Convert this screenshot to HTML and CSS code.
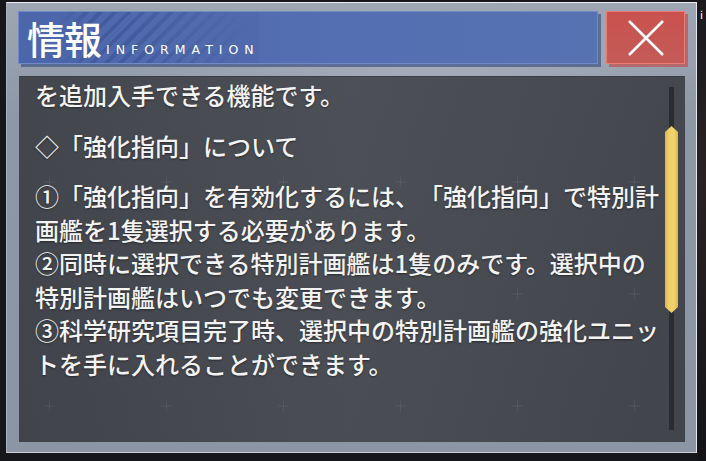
FILE: index.html
```html
<!DOCTYPE html>
<html lang="ja">
<head>
    <meta charset="UTF-8">
    <meta name="viewport" content="width=device-width,initial-scale=1">
    <title>情報</title>
    <link rel="stylesheet" href="styles.css">
</head>
<body>
    <section class="panel">
        <header class="head">
            <div class="title">
                <h1>情報</h1>
                <span class="sub">INFORMATION</span>
            </div>
            <a class="close" href="javascript:;">
                <svg width="36" height="36" viewBox="0 0 36 36">
                    <path d="M1 1L35 35M35 1L1 35" stroke="#fff" stroke-width="2.6" fill="none"/>
                </svg>
            </a>
        </header>
        <div class="body">
            <div class="text">
                <p>を追加入手できる機能です。</p>
                <p>◇「強化指向」について</p>
                <p>①「強化指向」を有効化するには、「強化指向」で特別計<br>画艦を1隻選択する必要があります。<br>②同時に選択できる特別計画艦は1隻のみです。選択中の<br>特別計画艦はいつでも変更できます。<br>③科学研究項目完了時、選択中の特別計画艦の強化ユニッ<br>トを手に入れることができます。</p>
            </div>
            <div class="scroll">
                <div class="thumb"></div>
            </div>
        </div>
    </section>
    <div class="side">i</div>
</body>
</html>
```

FILE: styles.css
```css
/* reset */
body{
    margin: 0;
    height: 461px;
    display: flex;
    background: #15171b;
    font-family: "Noto Sans CJK JP", "Noto Sans", sans-serif;
    overflow: hidden;
}
h1,p{
    margin: 0;
}
/* panel */
.panel{
    margin: 2px 0 0 6px;
    padding: 8px 11px 10px 11px;
    box-sizing: border-box;
    width: 691px;
    height: 451px;
    border-top: 1px solid #e9edf2;
    border-right: 1px solid #e3e7ec;
    border-bottom: 1px solid #cdd2d9;
    border-left: 1px solid #a9b1bc;
    background: radial-gradient(ellipse 300px 60px at 420px 60px, rgba(200,205,215,.35), rgba(200,205,215,0)),
                linear-gradient(#9ea6b3, #8d97a5 120px, #8b95a3);
    display: flex;
    flex-direction: column;
}
.head{
    height: 53px;
    display: flex;
    gap: 8px;
}
.title{
    width: 580px;
    box-sizing: border-box;
    display: flex;
    align-items: baseline;
    padding: 4px 0 0 8px;
    border: 1px solid #7189c4;
    background: linear-gradient(to right, rgba(80,104,172,0) 110px, #5069ac 230px) 0 0 / 240px 100% no-repeat,
                linear-gradient(to right, #4b66ab 40px, rgba(75,102,171,0) 70px) 0 0 / 240px 100% no-repeat,
                repeating-linear-gradient(-45deg, rgba(40,60,120,0) 0 6px, rgba(40,60,120,.3) 6px 10px) 0 0 / 240px 100% no-repeat,
                linear-gradient(to right, #4b66ab, #5570b2 60%, #5772b1);
    box-shadow: 3px 3px 0 rgba(70,88,138,.75);
}
.title h1{
    font-size: 38px;
    font-weight: 500;
    line-height: 44px;
    color: #fff;
    letter-spacing: -1px;
}
.sub{
    margin-left: 5px;
    font-family: "DejaVu Sans", sans-serif;
    font-size: 12.5px;
    letter-spacing: 6px;
    color: #fff;
}
.close{
    width: 79px;
    box-sizing: border-box;
    border: 1px solid #ec7b74;
    background: linear-gradient(#c9524e, #c45b57);
    box-shadow: 3px 3px 0 rgba(190,80,80,.7);
    display: flex;
    align-items: center;
    justify-content: center;
}
.close svg{
    display: block;
}
/* content */
.body{
    flex: 1;
    margin: 12px 0 0 1px;
    display: flex;
    border-top: 1px solid #3b3e44;
    background: url("data:image/svg+xml,%3Csvg xmlns='http://www.w3.org/2000/svg' width='117' height='112'%3E%3Cpath d='M25 105h11M30.5 99.5v11' stroke='%23ffffff' stroke-opacity='.06' stroke-width='1'/%3E%3C/svg%3E") 0 0 / 117px 112px,
                linear-gradient(to right, rgba(0,0,0,.05), rgba(255,255,255,.03) 50%, rgba(0,0,0,.04)),
                linear-gradient(#474a51, #44474e);
}
.text{
    flex: 1;
    padding: 1px 0 0 16px;
    color: #f3f3f3;
    font-size: 24px;
    font-weight: 500;
    line-height: 33.5px;
    white-space: nowrap;
    text-spacing-trim: space-all;
    text-shadow: 0 1px 2px rgba(0,0,0,.45);
}
.text p{
    margin-bottom: 17px;
}
.scroll{
    width: 13px;
    margin: 10px 7px 12px 0;
    background: linear-gradient(to right, transparent 4px, #2a2c30 4px, #2a2c30 9px, transparent 9px);
}
.thumb{
    height: 187px;
    margin-top: 39px;
    background: linear-gradient(to right, #d9b64c, #f0d064 30%, #f2d36a 70%, #d8b54a);
    clip-path: polygon(50% 0, 100% 6px, 100% calc(100% - 6px), 50% 100%, 0 calc(100% - 6px), 0 6px);
}
/* right edge */
.side{
    flex: 1;
    padding: 7px 0 0 3px;
    color: #fff;
    font-size: 11px;
    line-height: 14px;
    background: linear-gradient(#1a1a1e, #2a2222 40%, #141418);
}
```
